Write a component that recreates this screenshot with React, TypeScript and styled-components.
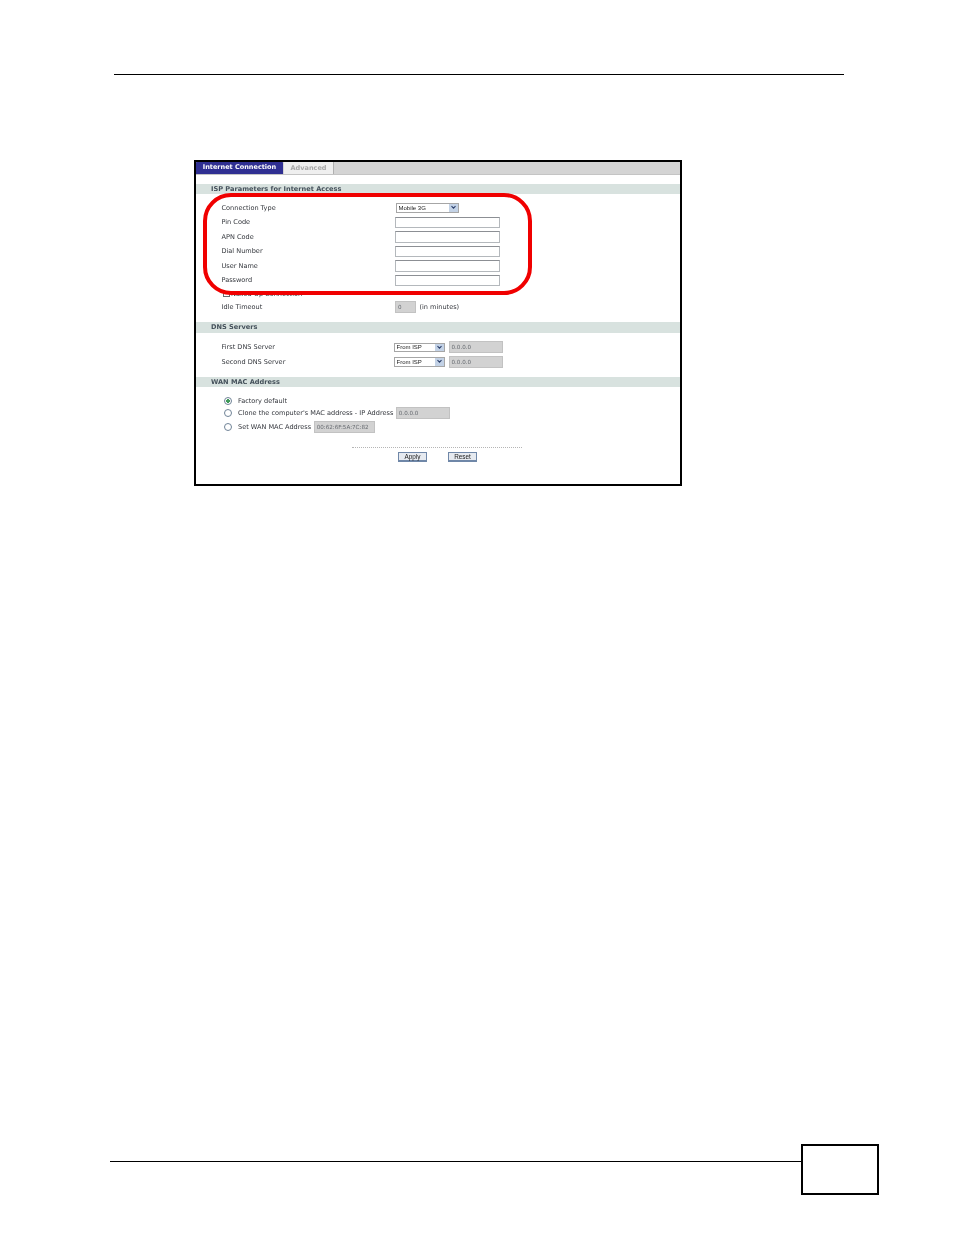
import React from "react"
import styled, { createGlobalStyle } from "styled-components"

const GlobalStyle = createGlobalStyle`
  html, body {
    margin: 0;
    padding: 0;
    background: #ffffff;
  }
`

const Row: React.FC<{ label: string; children: React.ReactNode; height?: number }> = ({ label, children, height }) => (
  <S.Row $height={height ?? 14.5}>
    <S.Label>{label}</S.Label>
    <S.Controls>{children}</S.Controls>
  </S.Row>
)

const Arrow = () => (
  <S.Arrow>
    <svg width="7" height="5" viewBox="0 0 7 5">
      <path d="M1.5 1.2l2 2 2-2" fill="none" stroke="#2b3f6b" strokeWidth="1.1" />
    </svg>
  </S.Arrow>
)

const Select: React.FC<{ value: string; width: number; nudge: number }> = ({ value, width, nudge }) => (
  <S.Select $width={width} $nudge={nudge}>
    <S.SelectText>{value}</S.SelectText>
    <Arrow />
  </S.Select>
)

export default function App() {
  return (
    <S.Page>
      <GlobalStyle />
      <S.TopRule />
      <S.Frame>
        <S.Screen>
          <S.TabBar>
            <S.ActiveTab>Internet Connection</S.ActiveTab>
            <S.IdleTab>Advanced</S.IdleTab>
          </S.TabBar>

          <S.SectionBar $top={8.5}>ISP Parameters for Internet Access</S.SectionBar>
          <S.Rows $top={6.5}>
            <Row label="Connection Type">
              <Select value="Mobile 3G" width={63} nudge={1} />
            </Row>
            <Row label="Pin Code"><S.TextField /></Row>
            <Row label="APN Code"><S.TextField /></Row>
            <Row label="Dial Number"><S.TextField /></Row>
            <Row label="User Name"><S.TextField /></Row>
            <Row label="Password"><S.TextField /></Row>
            <S.CheckRow>
              <S.Check />
              <S.Label>Nailed-Up Connection</S.Label>
            </S.CheckRow>
            <Row label="Idle Timeout" height={12}>
              <S.GreyField $width={21}>0</S.GreyField>
              <S.Label>(in minutes)</S.Label>
            </Row>
          </S.Rows>

          <S.SectionBar $top={9}>DNS Servers</S.SectionBar>
          <S.Rows $top={7.5}>
            <Row label="First DNS Server">
              <Select value="From ISP" width={51} nudge={-1} />
              <S.GreyField $width={54}>0.0.0.0</S.GreyField>
            </Row>
            <Row label="Second DNS Server">
              <Select value="From ISP" width={51} nudge={-1} />
              <S.GreyField $width={54}>0.0.0.0</S.GreyField>
            </Row>
          </S.Rows>

          <S.SectionBar $top={7.5}>WAN MAC Address</S.SectionBar>
          <S.RadioRows>
            <S.RadioRow $height={11}>
              <S.Radio $checked />
              <S.Label>Factory default</S.Label>
            </S.RadioRow>
            <S.RadioRow $height={12}>
              <S.Radio />
              <S.Label>Clone the computer's MAC address - IP Address</S.Label>
              <S.GreyField $width={54}>0.0.0.0</S.GreyField>
            </S.RadioRow>
            <S.RadioRow $height={17}>
              <S.Radio />
              <S.Label>Set WAN MAC Address</S.Label>
              <S.GreyField $width={61}>00:62:6F:5A:7C:82</S.GreyField>
            </S.RadioRow>
          </S.RadioRows>

          <S.Divider />
          <S.Buttons>
            <S.Button>Apply</S.Button>
            <S.Button>Reset</S.Button>
          </S.Buttons>
        </S.Screen>
        <S.Highlight />
      </S.Frame>
      <S.Footer>
        <S.FooterRule />
        <S.PageBox />
      </S.Footer>
    </S.Page>
  )
}

const S = {
  Page: styled.div`
    position: relative;
    width: 954px;
    height: 1235px;
    overflow: hidden;
    background: #ffffff;
    padding-top: 74px;
    box-sizing: border-box;
    display: flex;
    flex-direction: column;
  `,
  TopRule: styled.div`
    margin-left: 114px;
    width: 730px;
    height: 1px;
    background: #000000;
  `,
  Frame: styled.div`
    position: relative;
    margin: 85px 0 0 194px;
    width: 488px;
    height: 326px;
    box-sizing: border-box;
    border: 2px solid #000000;
    background: #ffffff;
    overflow: hidden;
  `,
  Screen: styled.div`
    height: 100%;
    font-family: "DejaVu Sans", Verdana, sans-serif;
    font-size: 6.55px;
    color: #33363c;
    filter: blur(0.3px);
  `,
  TabBar: styled.div`
    display: flex;
    align-items: flex-end;
    gap: 1px;
    height: 13px;
    box-sizing: border-box;
    background: #d4d4d4;
    border-bottom: 1px solid #c4c4c4;
  `,
  ActiveTab: styled.div`
    width: 87px;
    height: 13px;
    box-sizing: border-box;
    padding-bottom: 1px;
    display: flex;
    align-items: center;
    justify-content: center;
    background: #2f2f92;
    color: #ffffff;
    font-weight: bold;
    font-size: 6.5px;
    border-radius: 2px 2px 0 0;
  `,
  IdleTab: styled.div`
    width: 50px;
    height: 12px;
    display: flex;
    align-items: center;
    justify-content: center;
    background: #efefef;
    color: #a8a8a8;
    font-weight: bold;
    border-right: 1px solid #b0b0b0;
    box-sizing: border-box;
  `,
  SectionBar: styled.div<{ $top: number }>`
    margin-top: ${(p) => p.$top}px;
    height: 10.5px;
    line-height: 10.5px;
    padding-left: 15px;
    background: #d8e2df;
    color: #44505a;
    font-weight: bold;
    font-size: 6.6px;
  `,
  Rows: styled.div<{ $top: number }>`
    margin-top: ${(p) => p.$top}px;
    display: flex;
    flex-direction: column;
  `,
  Row: styled.div<{ $height: number }>`
    display: grid;
    grid-template-columns: 173.5px 1fr;
    align-items: center;
    height: ${(p) => p.$height}px;
    padding-left: 25.5px;
  `,
  Label: styled.span`
    white-space: nowrap;
  `,
  Controls: styled.div`
    display: flex;
    align-items: center;
    gap: 3.5px;
  `,
  TextField: styled.div`
    width: 105px;
    height: 11.5px;
    box-sizing: border-box;
    border: 1px solid #b4b8bc;
    border-top-color: #8c8f94;
    background: #ffffff;
  `,
  GreyField: styled.div<{ $width: number }>`
    width: ${(p) => p.$width}px;
    height: 12px;
    box-sizing: border-box;
    padding-left: 2px;
    line-height: 11px;
    font-size: 5.6px;
    color: #666a70;
    background: #d2d2d2;
    border: 1px solid #c2c2c2;
  `,
  Select: styled.div<{ $width: number; $nudge: number }>`
    width: ${(p) => p.$width}px;
    height: 9.5px;
    margin-left: ${(p) => p.$nudge}px;
    box-sizing: border-box;
    display: flex;
    align-items: center;
    justify-content: space-between;
    border: 1px solid #a6a6a6;
    background: #ffffff;
  `,
  SelectText: styled.span`
    padding-left: 1.5px;
    font-family: "Liberation Sans", Arial, sans-serif;
    font-size: 6px;
    color: #222222;
  `,
  Arrow: styled.span`
    width: 9px;
    height: 100%;
    display: flex;
    align-items: center;
    justify-content: center;
    background: #c3d2e6;
  `,
  CheckRow: styled.div`
    display: flex;
    align-items: center;
    gap: 1px;
    height: 13.5px;
    padding-left: 27px;
  `,
  Check: styled.span`
    width: 7px;
    height: 6px;
    box-sizing: border-box;
    border: 1px solid #666a70;
    background: #ffffff;
  `,
  RadioRows: styled.div`
    margin-top: 8.5px;
    display: flex;
    flex-direction: column;
  `,
  RadioRow: styled.div<{ $height: number }>`
    display: flex;
    align-items: center;
    height: ${(p) => p.$height}px;
    padding-left: 28px;
    gap: 2.5px;
  `,
  Radio: styled.span<{ $checked?: boolean }>`
    width: 8px;
    height: 8px;
    margin-right: 3.5px;
    box-sizing: border-box;
    border-radius: 50%;
    border: 1px solid #6f8296;
    background: ${(p) => (p.$checked ? "radial-gradient(circle, #3f9a5a 0 1.6px, #ffffff 2px)" : "#ffffff")};
  `,
  Divider: styled.div`
    margin: 11.5px 0 0 156px;
    width: 170px;
    border-top: 1px dotted #b5b5b5;
  `,
  Buttons: styled.div`
    margin: 4px 0 0 202px;
    display: flex;
    gap: 21px;
  `,
  Button: styled.div`
    width: 29px;
    height: 10px;
    box-sizing: border-box;
    display: flex;
    align-items: center;
    justify-content: center;
    font-family: "Liberation Sans", Arial, sans-serif;
    font-size: 6.4px;
    color: #222222;
    background: #e6eaf0;
    border: 1px solid #6f87a8;
    border-bottom-width: 2px;
  `,
  Highlight: styled.div`
    position: absolute;
    left: 7px;
    top: 31px;
    width: 329px;
    height: 102px;
    box-sizing: border-box;
    border: 4px solid #f00000;
    border-radius: 28px;
    pointer-events: none;
  `,
  Footer: styled.div`
    position: absolute;
    left: 110px;
    top: 1144px;
    display: flex;
    align-items: flex-start;
  `,
  FooterRule: styled.div`
    margin-top: 17px;
    width: 691px;
    height: 1px;
    background: #000000;
  `,
  PageBox: styled.div`
    width: 78px;
    height: 51px;
    box-sizing: border-box;
    border: 2px solid #000000;
    background: #ffffff;
  `,
}
